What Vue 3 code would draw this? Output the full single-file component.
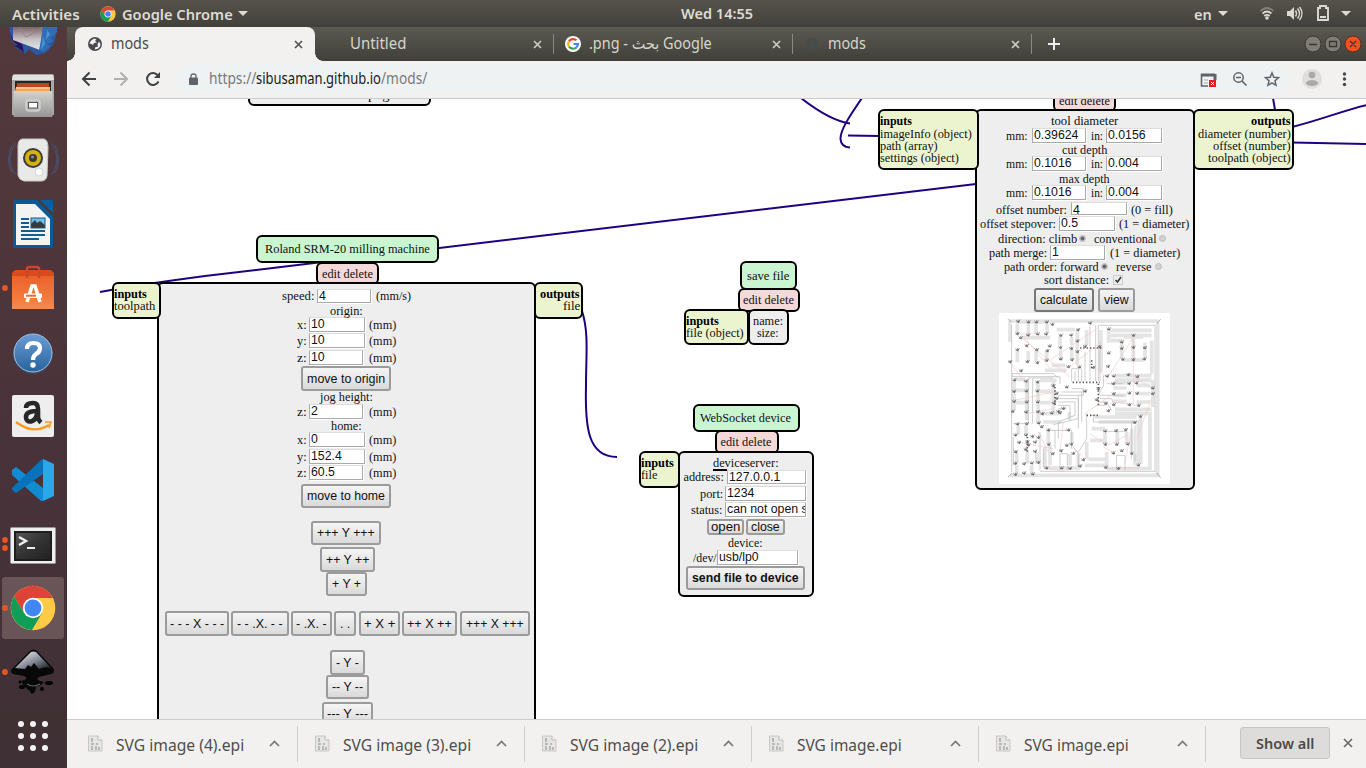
<script setup>
import { h } from 'vue'

/* Single line of text squeezed or stretched to a given width */
const fit = (el, w) => {
  const n = el.offsetWidth
  if (n && w) el.style.transform = `scaleX(${w / n})`
}
const FitText = (p) =>
  h('span', { class: 'fit', style: { width: p.w + 'px' } }, [
    h('span', { class: 'fit-in', onVnodeMounted: (v) => fit(v.el, p.w) }, p.s),
  ])
FitText.props = ['s', 'w']

const t = (a, b, s) => ({ k: 'text', a, b, s })
const i = (a, b, s) => ({ k: 'input', a, b, s })
const b = (a, z, s, pad = 6) => ({ k: 'button', a, b: z, s, pad })
const r = (a, on) => ({ k: 'radio', a, b: a + 7, on })
const row = (y, hh, ...items) => ({ y, h: hh, items })

const mm = (y, first, val, end = 365) => row(y, 15, t(297, 307, first), i(309, end, val), t(369, 396, '(mm)'))
const tool = (y, m, n) => row(y, 15, t(1006, 1028, 'mm:'), i(1032, 1086, m), t(1091, 1103, 'in:'), i(1106, 1162, n))

const nodes = [
  { c: 'body', x: 248, y: 60, w: 183, h: 46, rows: [row(89, 12, t(368, 389, 'png'))] },

  { c: 'del', x: 1053, y: 89, w: 63, h: 23, rows: [row(95, 12, t(1059, 1110, 'edit delete'))] },
  { c: 'body', x: 975, y: 109, w: 219.5, h: 380.5, rows: [
    row(115, 12, t(1051, 1118, 'tool diameter')),
    tool(128, '0.39624', '0.0156'),
    row(144, 12, t(1062, 1107, 'cut depth')),
    tool(156, '0.1016', '0.004'),
    row(173, 12, t(1059, 1110, 'max depth')),
    tool(185, '0.1016', '0.004'),
    row(202, 13, { ...t(996, 1067, 'offset number:'), low: true }, { ...i(1071, 1127, '4'), low: true }, { ...t(1131, 1173, '(0 = fill)'), low: true }),
    row(216, 15, t(980, 1056, 'offset stepover:'), i(1059, 1115, '0.5'), t(1119, 1189, '(1 = diameter)')),
    row(233, 12, t(998, 1077, 'direction: climb'), r(1079, true), t(1094, 1157, 'conventional'), r(1159, false)),
    row(245, 15, t(989, 1047, 'path merge:'), i(1050, 1105, '1'), t(1110, 1180, '(1 = diameter)')),
    row(261, 12, t(1004, 1099, 'path order: forward'), r(1101, true), t(1116, 1152, 'reverse'), r(1155, false)),
    row(274, 12, t(1044, 1109, 'sort distance:'), { k: 'check', a: 1114, b: 1122 }),
    row(288, 24, { ...b(1034, 1094, 'calculate'), dark: true }, b(1098, 1135, 'view')),
    row(313, 171, { k: 'board', a: 999, b: 1170 }),
  ] },
  { c: 'port', x: 878, y: 109, w: 100.5, h: 61, rows: [
    row(115, 12, { ...t(880, 912, 'inputs'), bold: true }), row(128, 12, t(880, 972, 'imageInfo (object)')),
    row(140, 12, t(880, 938, 'path (array)')), row(152, 12, t(880, 959, 'settings (object)')),
  ] },
  { c: 'port', x: 1193, y: 109, w: 100.5, h: 61, rows: [
    row(115, 12, { ...t(1251, 1291, 'outputs'), bold: true }), row(128, 12, t(1198, 1291, 'diameter (number)')),
    row(140, 12, t(1213, 1291, 'offset (number)')), row(152, 12, t(1208, 1291, 'toolpath (object)')),
  ] },

  { c: 'title', x: 256, y: 234.5, w: 183, h: 28.5, rows: [row(243, 12, t(264.5, 429, 'Roland SRM-20 milling machine'))] },
  { c: 'del', x: 316, y: 262, w: 63, h: 23, rows: [row(268, 12, t(322, 373, 'edit delete'))] },
  { c: 'body', x: 157, y: 282, w: 378.5, h: 460, rows: [
    row(289, 14, t(282, 314, 'speed:'), i(317, 371, '4'), t(376, 411.5, '(mm/s)')),
    row(305, 12, t(330, 363, 'origin:')),
    mm(317, 'x:', '10'), mm(333, 'y:', '10'), mm(350, 'z:', '10', 363),
    row(366, 25, b(301, 391, 'move to origin')),
    row(391, 12, t(320, 373, 'jog height:')),
    mm(404, 'z:', '2', 363),
    row(420, 12, t(331, 362, 'home:')),
    mm(432, 'x:', '0'), mm(449, 'y:', '152.4'), mm(465, 'z:', '60.5', 363),
    row(484, 24, b(301, 391, 'move to home')),
    row(521, 24, b(311, 381, '+++ Y +++')),
    row(547, 25, b(320, 375, '++ Y ++')),
    row(572, 24, b(326, 367, '+ Y +')),
    row(611, 25, b(165, 229, '- - - X - - -', 5), b(231, 288.5, '- - .X. - -'), b(291, 331.5, '- .X. -', 5), b(334, 356, '. .'),
      b(359, 400, '+ X +', 5), b(402, 457, '++ X ++', 5), b(460, 529.5, '+++ X +++')),
    row(650, 25, b(330, 365, '- Y -')),
    row(675, 24, b(326, 369, '-- Y --')),
    row(702, 24, b(322, 373, '--- Y ---', 5)),
  ] },
  { c: 'port', x: 111.5, y: 282, w: 49.5, h: 37, rows: [
    row(288, 12, { ...t(114, 147, 'inputs'), bold: true }), row(300, 12, t(114, 155, 'toolpath')),
  ] },
  { c: 'port', x: 534, y: 282, w: 49, h: 37, rows: [
    row(288, 12, { ...t(540, 580, 'outputs'), bold: true }), row(300, 12, t(563, 580, 'file')),
  ] },

  { c: 'title', x: 740, y: 261, w: 57, h: 29, rows: [row(270, 12, t(747, 789, 'save file'))] },
  { c: 'del', x: 738, y: 288, w: 61.5, h: 24, rows: [row(294, 12, t(743, 794, 'edit delete'))] },
  { c: 'port', x: 684, y: 309, w: 65, h: 36, rows: [
    row(315, 12, { ...t(686, 719, 'inputs'), bold: true }), row(327, 12, t(686, 744, 'file (object)')),
  ] },
  { c: 'body', x: 748, y: 309, w: 41, h: 36, rows: [
    row(315, 12, t(753, 783, 'name:')), row(327, 12, t(757, 779, 'size:')),
  ] },

  { c: 'title', x: 692.5, y: 403.5, w: 107, h: 28.5, rows: [row(412, 12, t(700, 791, 'WebSocket device'))] },
  { c: 'del', x: 715, y: 430, w: 64, h: 24, rows: [row(436, 12, t(720.5, 771.5, 'edit delete'))] },
  { c: 'port', x: 639, y: 451, w: 41, h: 36.5, rows: [
    row(457, 12, { ...t(641, 674, 'inputs'), bold: true }), row(469, 12, t(641, 657, 'file')),
  ] },
  { c: 'body', x: 678, y: 451, w: 135.5, h: 145.5, rows: [
    row(457, 12, t(713, 779, 'deviceserver:')),
    row(469, 2, { k: 'bar', a: 713, b: 727 }),
    row(470, 14, t(683.5, 723.5, 'address:'), i(727, 806, '127.0.0.1')),
    row(486, 15, t(700, 723, 'port:'), i(725, 806, '1234')),
    row(502, 15, t(691, 722, 'status:'), i(725, 806, 'can not open socket')),
    row(519, 16, b(707, 744, 'open', 4), b(746, 785, 'close', 5)),
    row(537, 12, t(728, 763, 'device:')),
    row(550, 15, t(693, 717, '/dev/'), i(717, 798, 'usb/lp0')),
    row(566, 24, { ...b(686, 805, 'send file to device'), bold: true }),
  ] },
]

/* Rows and items follow one another; gaps come from their extents */
for (const n of nodes) {
  let y = n.y + 2
  for (const q of n.rows) {
    q.style = { marginTop: q.y - y + 'px', height: q.h + 'px' }
    y = q.y + q.h
    let x = n.x + 2
    for (const e of q.items) {
      e.style = { marginLeft: e.a - x + 'px', width: e.b - e.a + 'px' }
      x = e.b
    }
  }
}

const wires = [
  'M100 292 C125 287 160 282 205 276 L976 184',
  'M582 311 C589 333 586 355 586 385 C585 425 587 457 617 457',
  'M801 98 C815 109 833 121 850 123.5',
  'M862 98 C851 114 840 130 840.5 139 Q841 147 850 147.5',
  'M848 135.4 L880 136',
  'M1273 98 L1275 110',
  'M1292 127 C1320 120 1345 110 1367 105',
  'M1292 142.5 L1367 144',
]

/* Traces on the board preview */
const wide = 'M60 47H506 M60 510H508 M60 45V110 M503 50V508 M82 50H175 M200 73H255 M100 97H180 M362 75H485 M362 90H485 M362 106H400 M485 106V205 M375 211H485 M375 224H485 M82 55V85 M115 55V85 M138 55V85 M171 55V85 M82 137V170 M115 137V170 M138 137V168 M170 137V165 M262 75V180 M290 75V120 M333 75V200 M356 75V112 M210 95V120 M245 95V120 M212 130V160 M245 130V160 M395 112V160 M430 92V160 M465 112V160 M400 95H460 M402 164H462 M185 180H225 M165 195H230 M72 228V315 M110 228V345 M144 228V355 M190 225V320 M75 222H105 M75 255H108 M75 292H108 M150 225H200 M150 258H190 M150 292H190 M370 232H410 M370 248H410 M370 270H410 M370 288H410 M440 225H480 M440 240H480 M440 265H480 M440 290H480 M488 225V305 M375 312H485 M375 325H485 M238 320V345 M160 350H215 M175 375V415 M245 380V410 M165 425V490 M180 420V480 M265 445V485 M240 445V480 M290 410V460 M305 370H345 M300 405H345 M295 462H345 M285 480H345 M445 345V475 M425 370V440 M452 335V475 M480 325V490 M345 382V415 M382 380V415 M410 380V415 M350 440V485 M435 445V480 M85 360V390 M108 360V390 M80 440V475 M112 440V475 M140 440V475 M80 480V505 M125 480V505 M315 335H440 M325 350H435 M150 325H210 M170 488H270 M350 490H485'
const thin = 'M65 60V500 M495 60V500 M67 205H190L205 218 M67 214H210V235 M67 205V215 M115 355V218H190 M245 228V190H265V228 M255 228V197 M275 228V190 M285 228V140 M300 228V60 M317 228V60 M325 228V60H495 M330 228V110 M205 270H280V250L245 250 M205 280H265V340L190 358 M205 290H255V330L205 350V400 M205 300H240V340 M205 310H230 M215 260H290 M275 350V260 M265 370V270 M290 325V400L265 440 M300 330H322 M310 335V350H440 M340 210V240L325 270H400 M330 280H365L370 295 M325 290H350L365 315 M320 300H345 M350 235H400 M210 495V445H232V495 M380 495V450H405V495 M150 498H495 M160 485V430 M250 425L265 445V485 M170 375H245V430 M345 378H410 M195 375V430 M425 350V460 M435 360V470 M70 355H110 M70 395V480 M150 380V495 M128 218V355'
const clusters = [
  [84, 50], [115, 51], [139, 50], [170, 52], [82, 86], [114, 89], [143, 88], [168, 87], [187, 57], [92, 99], [110, 122], [179, 122], [82, 135], [140, 134],
  [172, 136], [60, 171], [112, 170], [142, 172], [170, 167], [93, 197], [212, 90], [243, 91], [211, 127], [244, 129], [212, 163], [246, 164], [264, 73], [300, 55],
  [356, 72], [262, 107], [285, 125], [328, 125], [356, 143], [262, 141], [235, 185], [268, 185], [310, 188], [354, 184], [395, 110], [430, 92], [395, 130],
  [430, 126], [464, 129], [398, 163], [430, 163], [463, 163], [351, 213], [371, 212], [415, 210], [442, 215], [230, 245], [73, 226], [108, 228], [142, 230],
  [72, 260], [109, 258], [142, 257], [72, 290], [110, 291], [143, 290], [190, 243], [200, 265], [192, 293], [205, 320], [220, 310], [68, 318], [108, 322],
  [144, 320], [157, 325], [185, 325], [210, 323], [370, 235], [417, 236], [439, 234], [371, 265], [418, 265], [441, 265], [371, 298], [418, 300], [446, 301],
  [488, 265], [355, 318], [82, 357], [110, 355], [146, 355], [155, 365], [175, 374], [235, 376], [345, 378], [378, 376], [407, 375], [434, 352], [451, 333],
  [76, 391], [108, 390], [127, 393], [145, 398], [87, 412], [112, 410], [135, 412], [176, 418], [230, 420], [244, 418], [346, 418], [380, 417], [413, 418],
  [77, 440], [107, 432], [135, 440], [76, 475], [102, 475], [125, 475], [145, 472], [76, 507], [102, 505], [128, 507], [188, 445], [213, 438], [250, 445],
  [370, 443], [395, 438], [425, 445], [169, 488], [215, 490], [240, 490], [270, 482], [347, 488], [385, 490], [445, 479], [280, 465], [115, 420], [325, 250],
  [320, 285], [200, 280], [285, 257], [488, 250], [347, 295],
]
const arrows = clusters.map(([x, y], n) => {
  const a = (n % 3) - 1
  return `M${x - 6} ${y - 4 + a}l7 6m-1 -8l2 10m-7 -3l10 -1m1 -6l-5 8`
}).join('')
const pins = 'M248 231H330 M290 330H325 M325 235V300 M195 245V300 M270 128H340 M305 165V195 M112 395V440'
const rapid = 'M92 85L160 165 M88 86H140 M95 98L240 215 M180 165L320 70 M240 185L320 120 M345 230L430 95 M60 170L110 240 M75 285L190 260 M110 325L190 310 M160 160L180 190 M430 100V300 M370 290L440 300 M430 215L490 250 M285 325L370 265 M300 385L350 420 M355 420L410 390 M245 420L290 465 M340 425L370 440 M350 490L450 485 M440 400L485 280 M85 410L190 430 M170 490L230 498 M145 380L175 440 M220 350L210 440 M320 190L350 215 M420 390L405 475'

const tabs = [
  { s: 'Untitled', w: 56, icon: '' },
  { s: '.png - بحث Google', w: 123, icon: 'g' },
  { s: 'mods', w: 38, icon: 'm' },
]
const files = [
  ['SVG image (4).epi', 128], ['SVG image (3).epi', 128], ['SVG image (2).epi', 128], ['SVG image.epi', 105], ['SVG image.epi', 105],
]
const dots = [0, 1, 2, 3, 4, 5, 6, 7, 8]
</script>

<template>
  <div class="desktop">
    <header class="panel">
      <FitText class="act" s="Activities" :w="68" />
      <svg class="pchrome" width="16" height="16" viewBox="-23 -23 46 46">
        <circle r="22" fill="#fbc93d" /><path d="M-19 -11A22 22 0 0 1 19 -11L0 -10L-9 5Z" fill="#db4437" /><path d="M-19 -11A22 22 0 0 0 0 22L9 5L-9 5Z" fill="#109d58" /><circle r="10" fill="#fff" /><circle r="8" fill="#4285f4" />
      </svg>
      <FitText s="Google Chrome" :w="111" />
      <i class="caret"></i>
      <div class="clock"><FitText s="Wed 14:55" :w="72" /></div>
      <FitText class="lang" s="en" :w="18" />
      <i class="caret"></i>
      <svg class="tray" width="100" height="27" viewBox="1256 0 100 27" fill="none" stroke="#dcd9d3">
        <g stroke-width="1.7"><path d="M1260.500 11Q1267 5 1273.500 11" stroke="#85827b" /><path d="M1262.500 13.500Q1267 9.500 1271.500 13.500M1264.300 16Q1267 13.800 1269.700 16" /></g>
        <circle cx="1267" cy="18" r="1.800" fill="#dcd9d3" stroke="none" />
        <path d="M1287 11h3l4 -4v13l-4 -4h-3z" fill="#dcd9d3" stroke="none" />
        <path d="M1295.500 10.500q2 3 0 6M1297.500 8.500q4 5 0 10M1299.500 7q5 6.500 0 13" stroke-width="1.400" />
        <path d="M1318 8h2v-2h6v2h2v12h-10zM1320 17h6" stroke-width="1.900" />
        <path d="M1341 11h10l-5 5z" fill="#dcd9d3" stroke="none" />
      </svg>
    </header>

    <div class="main">
      <aside class="dock">
        <svg width="67" height="741" viewBox="0 27 67 741">
          <defs>
            <linearGradient id="metal" x2="0" y2="1"><stop stop-color="#d2d2d0" /><stop offset="1" stop-color="#969696" /></linearGradient>
            <linearGradient id="mail" x2="0" y2="1"><stop stop-color="#7d6568" /><stop offset=".55" stop-color="#c9c5c7" /><stop offset="1" stop-color="#e8e6e8" /></linearGradient>
            <linearGradient id="bag" x2="0" y2="1"><stop stop-color="#e95f2b" /><stop offset=".7" stop-color="#f37b3b" /><stop offset="1" stop-color="#f48a52" /></linearGradient>
            <linearGradient id="blue" x2="0" y2="1"><stop stop-color="#6a9cd6" /><stop offset="1" stop-color="#28639c" /></linearGradient>
            <linearGradient id="term" x2="1" y2="1"><stop stop-color="#555" /><stop offset=".5" stop-color="#333" /><stop offset="1" stop-color="#222" /></linearGradient>
            <linearGradient id="ink" x2="1" y2="1"><stop stop-color="#fff" /><stop offset=".55" stop-color="#848995" /><stop offset="1" stop-color="#111" /></linearGradient>
          </defs>
          <rect x="2" y="577" width="62" height="62" rx="3" fill="#695558" />
          <g><path d="M9.500 27Q9 41 18 47L14 47Q22 51 25 54L29 49L36 55Q46 55 52 46Q57 38 57 27Z" fill="#2c58a0" /><path d="M10 32Q11 42 18 45L14 46Q21 49 24 53L22 44L12 38Z" fill="#28145d" /><path d="M13 27H43L40 50L13 40Z" fill="url(#mail)" /><path d="M19 28L26 37L38 31L42 27" fill="none" stroke="#8f8589" /><path d="M43 27L41 40L39 50L44 52L50 47L48 44L53 41L51 38L57 32V27Z" fill="#2f6db5" /><path d="M43 36L41 50L45 44ZM47 30L46 40L50 34Z" fill="#4b94d8" /></g>
          <g><path d="M13 75Q13 74 15 74H52Q54 74 54 76V115H12V77Z" fill="#a9a9a7" /><path d="M13 75H53L54 80H12Z" fill="#e2e2df" /><rect x="15" y="81" width="36" height="12" fill="#242424" /><path d="M17 83H49V91H16Z" fill="#ba4819" /><path d="M16 87H50V91H15Z" fill="#f7a251" /><path d="M16 88H50" stroke="#ffe2b3" /><rect x="13.500" y="91" width="39" height="26" rx="1" fill="url(#metal)" /><rect x="26" y="100" width="14" height="11" rx="2" fill="#bbb" stroke="#ddd" /><rect x="28.500" y="102.500" width="9" height="5.500" fill="#fff" stroke="#555" /></g>
          <g><path d="M16 143Q4 160 16 175M12 145Q5 160 12 173M51 143Q63 160 51 175M55 145Q62 160 55 173" fill="none" stroke="#4b5473" stroke-width="1.200" opacity=".8" /><path d="M22 139H44Q48 140 48 148L47 176Q46 181 41 181H24Q19 180 18 175L18 146Q18 140 22 139Z" fill="#e9e9e8" stroke="#c8c8c5" /><circle cx="33" cy="158" r="10" fill="#3b3b35" /><circle cx="33" cy="158" r="8" fill="#d3b111" /><circle cx="33" cy="158" r="4" fill="#39393b" /><circle cx="32.500" cy="157" r="1.500" fill="#8b8b90" /><circle cx="39" cy="172" r="4" fill="#fafafa" stroke="#d5d5d5" /></g>
          <g><path d="M15 200H37L53 217V246Q53 248 50 248H15Q13 248 13 245V202Q13 200 15 200Z" fill="#075c95" /><path d="M40 200H51Q53 200 53 203V213Z" fill="#07609f" /><path d="M16 204H35L50 219V245H16Z" fill="#f3f3f2" /><path d="M21 219H29M21 223H29M21 227H29M21 231H45M21 235H45M21 239H39" stroke="#125e91" stroke-width="2" /><rect x="31" y="218" width="14" height="10" fill="#75bde3" /><path d="M31 228V224L35 220L37 223L40 221L45 225V228Z" fill="#343c40" /><rect x="31" y="218" width="14" height="10" fill="none" stroke="#125e91" /></g>
          <g><rect x="12" y="273" width="42" height="36" fill="url(#bag)" /><path d="M12 273L15 270H51L54 273V276H12Z" fill="#d94b1e" /><path d="M27 278V269Q27 267 29 267H37Q39 267 39 269V278" fill="none" stroke="#c94826" stroke-width="2.500" /><path d="M27 302L32 286H35L40 302" fill="none" stroke="#fff" stroke-width="3.600" /><rect x="24" y="293.500" width="18" height="4.500" rx="1" fill="#fff" /><path d="M26 295.700H36" stroke="#f0682d" stroke-width="2" /></g>
          <g><circle cx="33" cy="354" r="20" fill="#315681" opacity=".5" /><circle cx="33" cy="353" r="19" fill="url(#blue)" stroke="#a3c3e0" /><path d="M27 349Q27 343 33.500 343Q40 343 40 348Q40 352 36 354Q33 356 33 360" fill="none" stroke="#fff" stroke-width="4.200" /><circle cx="33" cy="365" r="2.700" fill="#fff" /></g>
          <g><rect x="12" y="395" width="42" height="42" rx="2" fill="#eee" /><path d="M26 408Q26 403 33 403Q38 403 38 409V417Q38 420 41 422.500M37 411Q26 411 26 417Q26 422 31 421.500Q36 420 37 414" fill="none" stroke="#272727" stroke-width="4.600" /><path d="M16 422Q33 435 49 425" fill="none" stroke="#fa9b20" stroke-width="2.300" /><path d="M45 422L51 422L49 428" fill="none" stroke="#fa9b20" stroke-width="1.600" /></g>
          <g><path d="M12 470L16 467L43 488V501L41 501L12 475Z" fill="#118bd1" /><path d="M12 488L41 460L43 459V474L16 493L12 490Z" fill="#0872ba" /><path d="M43 459L54 464V496L43 501Z" fill="#29a8ee" /></g>
          <g><rect x="10.500" y="527.500" width="45" height="36" rx="1" fill="#eee" stroke="#999" /><rect x="14" y="531" width="38" height="30" fill="#1d1d1d" /><rect x="16" y="533" width="34" height="26" fill="url(#term)" /><path d="M19 537L26 541L19 545" fill="none" stroke="#eee" stroke-width="2.400" /><path d="M27 548H35" stroke="#eee" stroke-width="2" /></g>
          <g transform="translate(33 608)"><circle r="22.300" fill="#ffca44" /><path d="M-19 -11.500A22.300 22.300 0 0 1 19 -11.500L20 -10H0L-9 5Z" fill="#db4437" /><path d="M-19 -11.500A22.300 22.300 0 0 0 -1 22L9 5L-9 5Z" fill="#109d58" /><circle r="10.200" fill="#fff" /><circle r="8.400" fill="#4285f4" /></g>
          <g><path d="M30 651Q33 648 37 651L53 668Q56 673 51 674L39 677Q34 680 44 682Q40 687 36 686L35 692Q31 696 30 691Q25 688 21 681Q30 679 24 676L13 674Q9 671 13 668Z" fill="#080808" /><path d="M31 652Q33 651 36 652L51 668Q45 666 39 669L34 663L31 667L28 665L25 669L15 668Z" fill="url(#ink)" /><path d="M27 684Q33 688 40 684" fill="none" stroke="#666" stroke-width="1.200" /><ellipse cx="22" cy="687" rx="3" ry="2" /><ellipse cx="49" cy="683" rx="4" ry="2" /><circle cx="42" cy="689" r="2" /><circle cx="20" cy="682" r="1.500" /></g>
          <circle v-for="d in dots" :key="d" :cx="21 + (d % 3) * 12" :cy="724 + Math.floor(d / 3) * 12" r="3" fill="#f4f2f2" />
          <g fill="#e95420"><circle v-for="y in [288, 540, 548, 608, 672]" :key="y" cx="5" :cy="y" r="2.900" /></g>
        </svg>
      </aside>

      <section class="browser">
        <div class="tabs">
          <div class="tab on">
            <svg class="fav" width="14" height="14" viewBox="0 0 14 14"><circle cx="7" cy="7" r="7" fill="#494b4f" /><path d="M6.500 1.500L8.500 2.500L7 4L9 5.500L6 6L5 8L2.500 6.500L1.500 7Q2 3 6.500 1.500ZM11 4.500L12.500 7Q12.500 10.500 9 12L7 12.500V10.500L10 9.500L9.500 7.500Z" fill="#f2f1f0" /></svg>
            <FitText class="up" s="mods" :w="38" />
            <svg class="x" width="9" height="9" viewBox="0 0 9 9"><path d="M1 1L8 8M8 1L1 8" stroke="#555" stroke-width="1.700" /></svg>
          </div>
          <div v-for="(q, n) in tabs" :key="n" class="tab">
            <span class="favbox">
              <svg v-if="q.icon === 'g'" width="16" height="16" viewBox="0 0 16 16" fill="none" stroke-width="2.200"><circle cx="8" cy="8" r="8" fill="#fff" /><path d="M4 5.300A5 5 0 0 1 11.500 4.300" stroke="#ea4335" /><path d="M4 5.300A5 5 0 0 0 4 10.700" stroke="#fbbc05" /><path d="M4 10.700A5 5 0 0 0 11.300 11.500" stroke="#34a853" /><path d="M11.300 11.500A5 5 0 0 0 13 8H8.500" stroke="#4285f4" /></svg>
              <svg v-if="q.icon === 'm'" width="14" height="14" viewBox="0 0 14 14"><circle cx="7" cy="7" r="6.500" fill="#494b4b" /><path d="M7 3L10 4L7 6L10 9L7 11L4 7Z" fill="#4d4d49" /></svg>
            </span>
            <FitText class="up" :s="q.s" :w="q.w" />
            <svg class="x" width="9" height="9" viewBox="0 0 9 9"><path d="M1 1L8 8M8 1L1 8" stroke="#cccbbf" stroke-width="1.700" /></svg>
          </div>
          <svg class="plus" width="12" height="12" viewBox="0 0 12 12"><path d="M6 0V12M0 6H12" stroke="#eee" stroke-width="2" /></svg>
          <svg class="win" width="58" height="18" viewBox="1304 35 58 18" fill="none"><g fill="#7f7d76" stroke="#393832"><circle cx="1313" cy="44" r="8" /><circle cx="1333" cy="44" r="8" /></g><circle cx="1353" cy="44" r="8" fill="#f3511f" stroke="#5a2d20" /><path d="M1309 44.500H1317M1329.500 41.500H1336.500V46.500H1329.500ZM1350 41L1356 47M1356 41L1350 47" stroke="#383731" stroke-width="1.300" /></svg>
        </div>

        <div class="toolbar">
          <svg class="nav" width="96" height="26" viewBox="79 66 96 26" fill="none" stroke-width="2"><path d="M96 79H83M89.500 72.500L83 79L89.500 85.500" stroke="#3f4143" /><path d="M114 79H127M120.500 72.500L127 79L120.500 85.500" stroke="#b0b0b0" /><path d="M158 75.500A6 6 0 1 0 158.500 81.500" stroke="#3f4143" /><path d="M160 72V78H154Z" fill="#3f4143" /></svg>
          <div class="omni">
            <svg class="lock" width="9" height="12" viewBox="0 0 9 12"><rect y="4.500" width="9" height="7.500" rx="1" fill="#60646a" /><path d="M2 5V3Q2 1 4.500 1Q7 1 7 3V5" fill="none" stroke="#60646a" stroke-width="1.300" /></svg>
            <FitText class="gray up" s="https://" :w="47" /><FitText class="host up" s="sibusaman.github.io" :w="125" /><FitText class="gray up" s="/mods/" :w="46" />
            <svg class="oi" width="82" height="20" viewBox="1200 69 82 20" fill="none" stroke="#5f6368"><path d="M1201.500 74V86H1208" stroke-width="1.600" /><path d="M1201 75H1215M1215 74V80" stroke-width="3" /><path d="M1204 80H1208M1204 83H1208" opacity=".5" /><rect x="1209" y="80" width="7" height="7" fill="#e51b24" stroke="none" /><path d="M1211 82L1214 85M1214 82L1211 85" stroke="#fff" /><circle cx="1238.500" cy="77.500" r="4.700" stroke-width="1.500" /><path d="M1242 81L1246.500 85.500M1236 77.500H1241" stroke-width="1.600" /><path d="M1272 73L1273.800 77.300L1278.500 77.700L1275 80.800L1276 85.300L1272 82.900L1268 85.300L1269 80.800L1265.500 77.700L1270.200 77.300Z" stroke-width="1.500" /></svg>
          </div>
          <svg class="me" width="50" height="20" viewBox="1302 69 50 20"><circle cx="1312" cy="79" r="10" fill="#dedede" /><circle cx="1312" cy="75" r="3.300" fill="#a9a9a9" /><ellipse cx="1312" cy="83" rx="6" ry="3" fill="#a9a9a9" /><g fill="#46494c"><circle cx="1344.500" cy="74" r="1.700" /><circle cx="1344.500" cy="79" r="1.700" /><circle cx="1344.500" cy="84.500" r="1.700" /></g></svg>
        </div>

        <main class="canvas">
          <svg class="wires" width="1299" height="620" viewBox="67 99 1299 620"><path v-for="(d, n) in wires" :key="n" :d="d" fill="none" stroke="#200080" stroke-width="2" /></svg>
          <div v-for="(n, k) in nodes" :key="k" class="node" :class="n.c" :style="{ left: n.x - 67 + 'px', top: n.y - 99 + 'px', width: n.w + 'px', height: n.h + 'px' }">
            <div v-for="(q, j) in n.rows" :key="j" class="row" :style="q.style">
              <div v-for="(e, m) in q.items" :key="m" class="item" :class="[e.k, { bold: e.bold, dark: e.dark, on: e.on, low: e.low }]" :style="e.style">
                <FitText v-if="e.k === 'text'" :s="e.s" :w="e.b - e.a" />
                <FitText v-else-if="e.k === 'button'" :s="e.s" :w="e.b - e.a - e.pad * 2" />
                <template v-else-if="e.k === 'input'">{{ e.s }}</template>
                <svg v-else-if="e.k === 'check'" width="8" height="8" viewBox="0 0 8 8"><path d="M1.500 4L3.500 6L7 1" fill="none" stroke="#333" stroke-width="1.600" /></svg>
                <svg v-else-if="e.k === 'board'" width="171" height="171" viewBox="27 23 513 513" fill="none">
                  <path :d="wide" stroke="#e4e4e4" stroke-width="11" /><path :d="thin" stroke="#c4c4c4" stroke-width="2.500" /><path :d="rapid" stroke="#f7c4c4" stroke-width="1.800" /><path :d="arrows" stroke="#5c5c5c" stroke-width="2" /><path :d="pins" stroke="#655" stroke-width="5" stroke-dasharray="4 6" /><path d="M54 40L64 50M512 42L501 54M54 515L66 504M512 517L500 503" stroke="#888" stroke-width="2" />
                </svg>
              </div>
            </div>
          </div>
        </main>

        <footer class="downloads">
          <div v-for="(f, n) in files" :key="n" class="file">
            <svg width="15" height="18" viewBox="0 0 15 18"><path d="M.5 1H10L14 5V16H.5Z" fill="#e6e6e5" stroke="#c7c7c5" /><path d="M10 1V5H14" fill="#fafafa" stroke="#bbb" /><path d="M3 4H5M4 4V7M3 9H6M8 9H10M3 12H5M7 12H9M11 12V15M3 14H5M7 14H9" stroke="#aaa" stroke-width="1.500" /></svg>
            <FitText class="fname" :s="f[0]" :w="f[1]" />
            <svg class="chev" width="11" height="7" viewBox="0 0 11 7"><path d="M1 6L5.500 1.500L10 6" fill="none" stroke="#777" stroke-width="1.700" /></svg>
          </div>
          <div class="all"><FitText s="Show all" :w="58" /></div>
          <svg class="close" width="10" height="10" viewBox="0 0 10 10"><path d="M1 1L9 9M9 1L1 9" stroke="#666" stroke-width="1.600" /></svg>
        </footer>
      </section>
    </div>
  </div>
</template>

<style>
body { overflow: hidden; }
.fit { display: inline-block; flex: none; white-space: nowrap; text-align: left; }
.fit-in { display: inline-block; transform-origin: 0 50%; white-space: nowrap; }
</style>

<style scoped>
.desktop { width: 1366px; height: 768px; overflow: hidden; display: flex; flex-direction: column; font-family: "Noto Sans", "Open Sans", "DejaVu Sans", sans-serif; font-size: 15.500px; }
.desktop * { box-sizing: border-box; }
svg { display: block; flex: none; }
.panel { height: 27px; flex: none; display: flex; align-items: center; background: linear-gradient(#57534c, #41403b); color: #dfdbd2; font-weight: 600; font-size: 14.500px; }
.act { margin-left: 12px; }
.pchrome { margin: 0 6px 0 20px; }
.caret { width: 0; border: 5px solid transparent; border-top-color: #dfdbd2; border-bottom: 0; margin-left: 5px; }
.clock { margin-left: 433px; width: 72px; margin-top: -1px; }
.lang { margin-left: 441px; }
.lang + .caret { margin-left: 6px; }
.tray { margin-left: 28px; }
.main { flex: 1; display: flex; min-height: 0; }
.dock { width: 67px; flex: none; background: linear-gradient(#53393c, #49333a 55%, #3e3034); }
.browser { width: 1299px; display: flex; flex-direction: column; }
.tabs { height: 34px; flex: none; display: flex; align-items: center; background: linear-gradient(#5b5a51, #403f3a); color: #d7d5c9; padding-left: 8px; }
.tab { width: 239px; height: 34px; display: flex; align-items: center; position: relative; padding-right: 12px; }
.tab:not(.on)::after { content: ""; position: absolute; right: 0; top: 7px; height: 20px; border-right: 1px solid #8b897f; }
.tab.on { width: 240px; background: #f2f1f0; border-radius: 8px 8px 0 0; color: #4a4a49; }
.tab.on::before, .tab.on::after { content: ""; position: absolute; bottom: 0; width: 8px; height: 8px; }
.tab.on::before { left: -8px; background: radial-gradient(circle at 0 0, transparent 7.500px, #f2f1f0 8px); }
.tab.on::after { right: -8px; background: radial-gradient(circle at 100% 0, transparent 7.500px, #f2f1f0 8px); }
.up { margin-top: -2px; }
.fav { margin: 0 9px 0 13px; }
.favbox { width: 16px; margin: 0 8px 0 11px; display: flex; justify-content: center; }
.x { margin-left: auto; }
.plus { margin-left: 16px; }
.win { margin-left: auto; margin-right: 4px; }
.toolbar { height: 38px; flex: none; background: #f2f1f0; border-bottom: 1px solid #ccc; display: flex; align-items: center; padding: 0 14px 1px 12px; }
.omni { width: 1115px; height: 28px; border-radius: 14px; background: #eef2f3; display: flex; align-items: center; padding-left: 14px; }
.lock { margin-right: 11px; }
.gray { color: #777b7f; }
.host { color: #1a1d20; }
.oi { margin-left: auto; margin-right: 8px; }
.me { margin-left: 12px; }
.canvas { height: 620px; flex: none; background: #fff; position: relative; overflow: hidden; font-family: "Liberation Serif", serif; font-size: 12.300px; line-height: 12px; color: #111; }
.wires { position: absolute; left: 0; top: 0; }
.node { position: absolute; border: 2px solid #000; border-radius: 6px; display: flex; flex-direction: column; background: #eee; }
.title { background: #c9f6d1; }
.del { background: #f4d9d9; }
.port { background: #ecf4cf; }
.row { display: flex; align-items: center; flex: none; }
.item { flex: none; }
.bold { font-weight: bold; color: #000; }
.text { height: 12px; }
.text.low { margin-top: 2px; }
.input { height: 100%; background: #fff; border: 1px solid #aaa; border-top-color: #ddd; box-shadow: 1px 1px #fff; padding-left: 1px; font-family: "Liberation Sans", sans-serif; line-height: 13px; white-space: nowrap; overflow: hidden; color: #111; }
.input.low { line-height: 14px; }
.button { height: 100%; border: 2px solid #9b9b9b; border-radius: 3px; background: linear-gradient(#f5f5f5, #dadada); display: flex; align-items: center; justify-content: center; font-family: "Liberation Sans", sans-serif; color: #111; }
.button.dark { border-color: #777; }
.radio { height: 7px; margin-top: -2px; border: 1px solid #bbb; border-radius: 50%; background: #d2d2d2; }
.radio.on { background: radial-gradient(#666 1.500px, #ccc 2.500px); }
.check { height: 8px; background: #eee; outline: 1px solid #ccc; }
.board { height: 171px; background: #fff; }
.bar { height: 2px; background: #000; }
.downloads { height: 49px; flex: none; background: #f2f1f0; border-top: 1px solid #ccc; display: flex; align-items: center; color: #4e4d4b; }
.file { width: 227px; height: 100%; display: flex; align-items: center; padding: 3px 14px 0 21px; position: relative; flex: none; }
.file svg:first-child { margin-right: 13px; margin-top: -4px; }
.file::after { content: ""; position: absolute; right: -4px; top: 6px; height: 36px; border-right: 1px solid #cfcecd; }
.fname { font-size: 16.500px; margin-top: -3px; }
.chev { margin-left: auto; margin-top: -4px; }
.all { margin-left: 38px; width: 90px; height: 32px; margin-top: -2px; border: 1px solid #c9c7c5; border-radius: 3px; background: #dedcda; display: flex; align-items: center; justify-content: center; font-size: 14.500px; font-weight: 600; color: #4c4a47; }
.close { margin-left: 13px; margin-top: -2px; }
</style>
